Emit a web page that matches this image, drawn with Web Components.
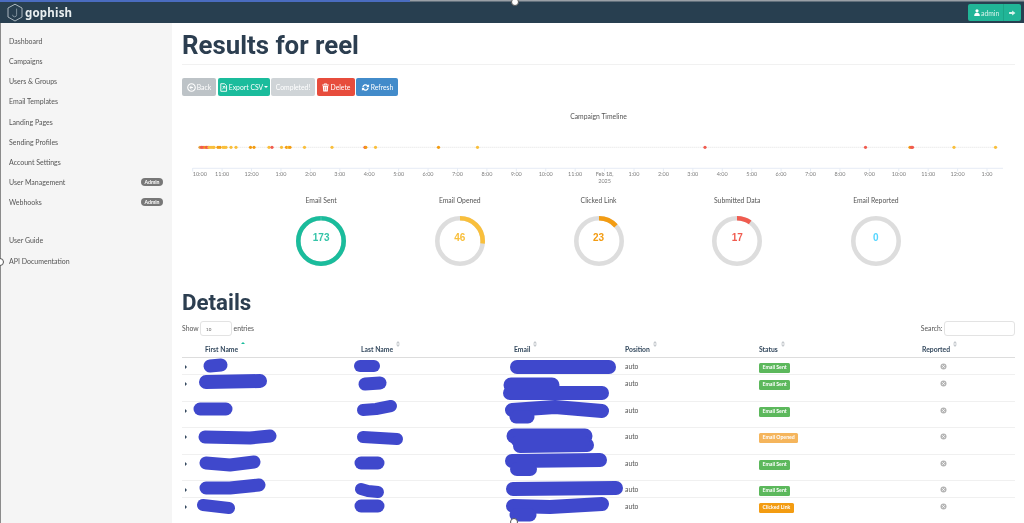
<!DOCTYPE html>
<html lang="en">
<head>
<meta charset="utf-8">
<title>gophish</title>
<style>
	html, body { margin: 0; height: 100%; background: #fff; overflow: hidden; }
</style>
</head>
<body>
<gp-app>
	<gp-topbar slot="top" user="admin"></gp-topbar>
	<gp-sidebar slot="side">
		<gp-nav-item>Dashboard</gp-nav-item>
		<gp-nav-item>Campaigns</gp-nav-item>
		<gp-nav-item>Users &amp; Groups</gp-nav-item>
		<gp-nav-item>Email Templates</gp-nav-item>
		<gp-nav-item>Landing Pages</gp-nav-item>
		<gp-nav-item>Sending Profiles</gp-nav-item>
		<gp-nav-item>Account Settings</gp-nav-item>
		<gp-nav-item badge="Admin">User Management</gp-nav-item>
		<gp-nav-item badge="Admin">Webhooks</gp-nav-item>
		<gp-nav-item class="first-help">User Guide</gp-nav-item>
		<gp-nav-item>API Documentation</gp-nav-item>
	</gp-sidebar>
	<gp-results>
		<gp-button slot="actions" color="#bdc3c7" icon="back" width="34">Back</gp-button>
		<gp-button slot="actions" color="#1abc9c" icon="file" width="52" caret>Export CSV</gp-button>
		<gp-button slot="actions" color="#cfd4d7" width="44">Completed!</gp-button>
		<gp-button slot="actions" color="#e74c3c" icon="trash" width="38">Delete</gp-button>
		<gp-button slot="actions" color="#428bca" icon="refresh" width="42">Refresh</gp-button>
		<gp-timeline slot="timeline"></gp-timeline>
		<gp-pie slot="pies" label="Email Sent" value="173" share="1" color="#1abc9c" text="#35c4a8"></gp-pie>
		<gp-pie slot="pies" label="Email Opened" value="46" share="0.266" color="#f9bf3b"></gp-pie>
		<gp-pie slot="pies" label="Clicked Link" value="23" share="0.133" color="#f39c12"></gp-pie>
		<gp-pie slot="pies" label="Submitted Data" value="17" share="0.098" color="#f05b4f"></gp-pie>
		<gp-pie slot="pies" label="Email Reported" value="0" share="0" color="#54d5ff"></gp-pie>
		<gp-table slot="details">
			<gp-row h="17" status="Email Sent" tone="#5cb85c"></gp-row>
			<gp-row h="27" status="Email Sent" tone="#5cb85c"></gp-row>
			<gp-row h="26" status="Email Sent" tone="#5cb85c"></gp-row>
			<gp-row h="27" status="Email Opened" tone="#f5b55c"></gp-row>
			<gp-row h="26" status="Email Sent" tone="#5cb85c"></gp-row>
			<gp-row h="17" status="Email Sent" tone="#5cb85c"></gp-row>
			<gp-row h="25" status="Clicked Link" tone="#f39c12"></gp-row>
		</gp-table>
	</gp-results>
	<gp-scribbles slot="over"></gp-scribbles>
</gp-app>

<script>
// icons used on the action buttons
const ICONS = {
	back: '<circle cx="5" cy="5" r="4.2" fill="none" stroke="#fff" stroke-width="1.2"/><path d="M6.6 5H3.4M5 3.2 3.2 5 5 6.8" fill="none" stroke="#fff" stroke-width="1.1"/>',
	file: '<path d="M2 .8h4.2L8.4 3v6.2H2z" fill="none" stroke="#fff" stroke-width="1"/><path d="M6.4 3.2 3.8 7M4 4h2.6v2.4" fill="none" stroke="#fff" stroke-width=".9"/>',
	trash: '<path d="M1.2 2.3h7.6M3.6 2.2V1h2.8v1.2" fill="none" stroke="#fff" stroke-width="1"/><path d="M2 3.2h6l-.5 6.2h-5z" fill="#fff"/><path d="M4 4.2v4M6 4.2v4" stroke="#e74c3c" stroke-width=".6"/>',
	refresh: '<path d="M1.4 4.4A3.7 3.7 0 0 1 7.8 2.6L9 1.4v3.4H5.6l1.2-1.2A2.3 2.3 0 0 0 2.8 4.4zM8.6 5.6A3.7 3.7 0 0 1 2.2 7.4L1 8.6V5.2h3.4L3.2 6.4a2.3 2.3 0 0 0 4-.8z" fill="#fff"/>'
};

class GpApp extends HTMLElement {
	constructor() {
		super();
		this.attachShadow({ mode: 'open' });
		this.shadowRoot.innerHTML = `
			<style>
				:host {
					display: grid;
					grid-template-rows: 23px 500px;
					grid-template-columns: 172px 852px;
					width: 1024px;
					height: 523px;
					position: relative;
					overflow: hidden;
					font-family: Lato, "Noto Sans", sans-serif;
					color: #555;
					filter: blur(0.4px);
				}
				.top { grid-column: 1 / 3; display: block; }
			</style>
			<slot name="top" class="top"></slot>
			<slot name="side"></slot>
			<slot></slot>
			<slot name="over"></slot>
		`;
	}
}

class GpTopbar extends HTMLElement {
	constructor() {
		super();
		this.attachShadow({ mode: 'open' });
	}

	connectedCallback() {
		this.shadowRoot.innerHTML = `
			<style>
				:host {
					display: flex;
					align-items: center;
					justify-content: space-between;
					grid-column: 1 / 3;
					height: 23px;
					box-sizing: border-box;
					padding: 2px 3px 0 6px;
					background: #283f50;
				}
				.brand { display: flex; align-items: center; gap: 1px; color: #e8eef0; font: 700 11.500px "Noto Sans", sans-serif; letter-spacing: .2px; }
				.user { display: flex; height: 17px; border-radius: 2px; background: #21b597; color: #d9f3ec; font-size: 6.800px; }
				.name { display: flex; align-items: center; gap: 1px; width: 35px; box-sizing: border-box; padding-left: 6px; }
				.out { display: flex; align-items: center; justify-content: center; width: 17px; border-left: 1px solid #1ca587; }
			</style>
			<div class="brand">
				<svg width="18" height="19" viewBox="0 0 18 19"><path d="M9 1.2 16 5v9l-7 4-7-4V5z" fill="none" stroke="#aab6be" stroke-width="1"/><path d="M10.6 5.6v6.2a2 2 0 0 1-4 0" fill="none" stroke="#7f909c" stroke-width="1"/></svg>
				<span>gophish</span>
			</div>
			<div class="user">
				<div class="name">
					<svg width="6" height="7" viewBox="0 0 6 7"><circle cx="3" cy="1.8" r="1.6" fill="#fff"/><path d="M.2 7c0-2.4 1-3.2 2.8-3.2S5.800 4.600 5.800 7z" fill="#fff"/></svg>
					<span>${this.getAttribute('user')}</span>
				</div>
				<div class="out">
					<svg width="7" height="6" viewBox="0 0 8 7"><path d="M0 2.400h3.600V.6L7.400 3.500 3.600 6.400V4.600H0z" fill="#d9f3ec"/></svg>
				</div>
			</div>
		`;
	}
}

class GpSidebar extends HTMLElement {
	constructor() {
		super();
		this.attachShadow({ mode: 'open' });
		this.shadowRoot.innerHTML = `
			<style>
				:host {
					display: block;
					box-sizing: border-box;
					height: 500px;
					padding-top: 7.700px;
					background: #f5f5f5;
					border-left: 1px solid #8b8b8b;
				}
				::slotted(.first-help) { margin-top: 18px; }
			</style>
			<slot></slot>
		`;
	}
}

class GpNavItem extends HTMLElement {
	constructor() {
		super();
		this.attachShadow({ mode: 'open' });
	}

	connectedCallback() {
		const badge = this.getAttribute('badge');
		this.shadowRoot.innerHTML = `
			<style>
				:host {
					display: flex;
					align-items: center;
					justify-content: space-between;
					height: 20.200px;
					padding: 0 9px 0 8px;
					font-size: 7px;
					color: #555;
				}
				.badge {
					padding: 0 3.500px;
					line-height: 8px;
					border-radius: 4px;
					background: #777;
					color: #fff;
					font-size: 5.200px;
					font-weight: 700;
				}
			</style>
			<slot></slot>
			${badge ? `<span class="badge">${badge}</span>` : ''}
		`;
	}
}

class GpResults extends HTMLElement {
	constructor() {
		super();
		this.attachShadow({ mode: 'open' });
		this.shadowRoot.innerHTML = `
			<style>
				:host {
					display: block;
					box-sizing: border-box;
					height: 500px;
					padding: 0 9px 0 10px;
					background: #fff;
				}
				h1, h2 { margin: 0; font-family: Roboto, sans-serif; font-weight: 700; color: #2c3e50; }
				h1 { height: 42px; box-sizing: border-box; padding-top: 6px; font-size: 25.800px; line-height: 32px; border-bottom: 1px solid #f1f1f1; }
				h2 { margin-top: 22.300px; height: 27px; font-size: 22.300px; line-height: 28px; }
				.actions { display: flex; gap: 1.500px; margin-top: 13px; height: 18px; }
				.pies { display: flex; justify-content: center; margin-top: 11px; }
			</style>
			<h1>Results for reel</h1>
			<div class="actions"><slot name="actions"></slot></div>
			<slot name="timeline"></slot>
			<div class="pies"><slot name="pies"></slot></div>
			<h2>Details</h2>
			<slot name="details"></slot>
		`;
	}
}

class GpButton extends HTMLElement {
	constructor() {
		super();
		this.attachShadow({ mode: 'open' });
	}

	connectedCallback() {
		const icon = this.getAttribute('icon');
		this.shadowRoot.innerHTML = `
			<style>
				:host {
					display: flex;
					align-items: center;
					justify-content: center;
					gap: 1px;
					box-sizing: border-box;
					width: ${this.getAttribute('width')}px;
					height: 18px;
					border-radius: 2px;
					background: ${this.getAttribute('color')};
					color: #fff;
					font-size: 6.800px;
				}
				.caret { width: 0; height: 0; border: 2px solid transparent; border-top: 2.500px solid #fff; border-bottom: 0; }
			</style>
			${icon ? `<svg width="9" height="9" viewBox="0 0 10 10">${ICONS[icon]}</svg>` : ''}
			<slot></slot>
			${this.hasAttribute('caret') ? '<span class="caret"></span>' : ''}
		`;
	}
}

class GpTimeline extends HTMLElement {
	constructor() {
		super();
		this.attachShadow({ mode: 'open' });
	}

	connectedCallback() {
		const hours = ['10:00', '11:00', '12:00', '1:00', '2:00', '3:00', '4:00', '5:00', '6:00', '7:00', '8:00', '9:00', '10:00', '11:00', null,
			'1:00', '2:00', '3:00', '4:00', '5:00', '6:00', '7:00', '8:00', '9:00', '10:00', '11:00', '12:00', '1:00'];
		const y = '#f9bf3b', o = '#f39c12', r = '#f05b4f';
		const dots = [[200, '#e8a33d'], [201.500, r], [203, r], [205, o], [206.500, r], [208, r], [209, y], [211, y], [213, y], [214, y], [218, o], [220, o],
			[223, y], [224.500, y], [226, y], [231, y], [236, y], [250.500, o], [254, o], [269, y], [272, r], [281.500, y],
			[286.500, o], [288.500, y], [290, o], [304.500, y], [332, y], [365, r], [365.800, o], [375.500, y], [438.500, o], [477.500, y],
			[705, r], [865.500, r], [910, o], [911.500, r], [912.500, r], [954, y], [995.500, y]];
		const x0 = 10.700;
		const step = 29.420;
		const ticks = hours.map((h, i) => {
			const x = x0 + i * step;
			const anchor = i === 0 ? ' style="text-anchor:start"' : '';
			const label = h === null
				? `<text x="${x}" y="48">Feb 18,</text><text x="${x}" y="54.500">2025</text>`
				: `<text x="${x}" y="48"${anchor}>${h}</text>`;
			return `<path d="M${x} 40v3.500" stroke="#e6ecf5"/>${label}`;
		}).join('');
		const points = dots.map(([x, c]) => `<circle cx="${x - 182}" cy="19.300" r="1.600" fill="${c}"/>`).join('');
		this.shadowRoot.innerHTML = `
			<style>
				:host { display: block; height: 88px; }
				.title { height: 32px; padding-top: 15px; box-sizing: border-box; text-align: center; font-size: 6.800px; line-height: 10px; }
				svg { display: block; }
				text { font: 5.500px Lato, "Noto Sans", sans-serif; fill: #808080; text-anchor: middle; }
			</style>
			<div class="title">Campaign Timeline</div>
			<svg width="833" height="56" viewBox="0 0 833 56">
				<path d="M16 19.300H816" stroke="#e2e2e2" stroke-width=".7" stroke-dasharray="1.500 .5"/>
				<path d="M10.700 40.300H821" stroke="#e6ecf5" stroke-width="1"/>
				${ticks}
				${points}
			</svg>
		`;
	}
}

class GpPie extends HTMLElement {
	constructor() {
		super();
		this.attachShadow({ mode: 'open' });
	}

	connectedCallback() {
		const share = Number(this.getAttribute('share'));
		const color = this.getAttribute('color');
		const r = 22.700;
		const len = 2 * Math.PI * r;
		const seam = share === 1 ? `<path d="M25 0v5" stroke="#fff" stroke-opacity=".35" stroke-width=".6"/>` : '';
		this.shadowRoot.innerHTML = `
			<style>
				:host { display: block; width: 138.700px; text-align: center; }
				.label { font-size: 6.800px; line-height: 10px; height: 20.700px; }
				.ring { position: relative; width: 50px; height: 50px; margin: 0 auto; }
				svg { display: block; }
				.value {
					position: absolute;
					inset: 0 0 6px 0;
					display: flex;
					align-items: center;
					justify-content: center;
					font: 700 10px "Liberation Sans", sans-serif;
					color: ${this.getAttribute('text') || color};
				}
			</style>
			<div class="label">${this.getAttribute('label')}</div>
			<div class="ring">
				<svg width="50" height="50" viewBox="0 0 50 50">
					<circle cx="25" cy="25" r="${r}" fill="none" stroke="#dddddd" stroke-width="4.600"/>
					<circle cx="25" cy="25" r="${r}" fill="none" stroke="${color}" stroke-width="4.600"
						stroke-dasharray="${share * len} ${len}" transform="rotate(-90 25 25)"/>
					${seam}
				</svg>
				<div class="value">${this.getAttribute('value')}</div>
			</div>
		`;
	}
}

const COLUMNS = '23px 156px 153px 111px 134px 163px 1fr';

class GpTable extends HTMLElement {
	constructor() {
		super();
		this.attachShadow({ mode: 'open' });
		const sort = `<svg class="sort" width="4" height="6" viewBox="0 0 4 6"><path d="M2 0 4 2.400H0zM2 6 0 3.600H4z" fill="#c4c8cc"/></svg>`;
		this.shadowRoot.innerHTML = `
			<style>
				:host { display: block; font-size: 6.800px; color: #555; }
				.controls { display: flex; align-items: center; justify-content: space-between; height: 15px; margin-top: 6px; }
				.group { display: flex; align-items: center; gap: 1.500px; }
				.box { box-sizing: border-box; height: 15px; border: 1px solid #e3e3e3; border-radius: 3px; background: #fff; }
				.select { width: 32px; padding-left: 5px; font-size: 4.500px; line-height: 16px; }
				.search { width: 71px; }
				.head {
					display: grid;
					grid-template-columns: ${COLUMNS};
					height: 22px;
					box-sizing: border-box;
					border-bottom: 1px solid #ddd;
					font-weight: 700;
					color: #34495e;
					line-height: 9px;
					padding-top: 9px;
				}
				.head span { display: flex; align-items: flex-start; gap: 3px; }
				.sort { margin-top: -4px; }
				.up { margin-top: -3px; width: 0; height: 0; border: 2.200px solid transparent; border-bottom: 2.500px solid #1abc9c; border-top: 0; }
				.foot { border-bottom: 1px solid #eee; }
			</style>
			<div class="controls">
				<div class="group">Show <div class="box select">10</div> entries</div>
				<div class="group">Search: <div class="box search"></div></div>
			</div>
			<div class="head">
				<span></span>
				<span>First Name <i class="up"></i></span>
				<span>Last Name ${sort}</span>
				<span>Email ${sort}</span>
				<span>Position ${sort}</span>
				<span>Status ${sort}</span>
				<span>Reported ${sort}</span>
			</div>
			<div class="foot"><slot></slot></div>
		`;
	}
}

class GpRow extends HTMLElement {
	constructor() {
		super();
		this.attachShadow({ mode: 'open' });
	}

	connectedCallback() {
		this.shadowRoot.innerHTML = `
			<style>
				:host {
					display: grid;
					grid-template-columns: ${COLUMNS};
					align-items: start;
					height: ${this.getAttribute('h')}px;
					box-sizing: border-box;
					padding-top: 4.500px;
					border-bottom: 1px solid #f0f0f0;
					font-size: 6.800px;
					line-height: 9px;
				}
				:host(:last-child) { border-bottom: 0; }
				.arrow { width: 0; height: 0; margin: 2.500px 0 0 3px; border: 2.200px solid transparent; border-left: 2.800px solid #34495e; border-right: 0; }
				.label {
					display: inline-block;
					padding: 0 3.500px;
					line-height: 9.500px;
					border-radius: 1.500px;
					background: ${this.getAttribute('tone')};
					color: #fff;
					font-size: 5.200px;
					font-weight: 700;
				}
				.reported { display: block; margin: .5px 0 0 18px; }
			</style>
			<span class="arrow"></span>
			<span></span>
			<span></span>
			<span></span>
			<span>auto</span>
			<span><span class="label">${this.getAttribute('status')}</span></span>
			<svg class="reported" width="7" height="7" viewBox="0 0 7 7">
				<circle cx="3.500" cy="3.500" r="3" fill="#b4b4b4"/>
				<path d="M2.200 2.200 4.800 4.800M4.800 2.200 2.200 4.800" stroke="#fff" stroke-width=".8"/>
			</svg>
		`;
	}
}

// the marker strokes and editor handles that lie over the screenshot
class GpScribbles extends HTMLElement {
	constructor() {
		super();
		this.attachShadow({ mode: 'open' });
	}

	connectedCallback() {
		const strokes = [
			[13, '210,366 221,365'], [14, '206,382 260,381'], [12, '360,366 374,366'], [13, '365,384 380,383'],
			[14, '517,367 609,367'], [15, '511,385 552,385'], [14, '510,393 602,393'],
			[13, '200,409 226,409'], [12, '363,410 376,409 391,406'], [14, '512,410 555,407 602,411'], [13, '516,417 528,417'],
			[13, '205,437 250,438 270,436'], [12, '363,437 397,439'], [15, '514,436 585,436'], [14, '520,446 587,445'], [10, '516,441 585,441'],
			[13, '206,463 230,465 254,462'], [13, '361,463 378,463'], [14, '512,461 600,460'], [14, '517,469 530,469'],
			[13, '206,488 230,488 259,485'], [12, '361,489 368,491 378,492'], [14, '513,489 616,488'],
			[12, '203,505 229,508'], [13, '361,506 378,506'], [14, '513,506 550,507 602,504'], [13, '516,515 530,515']
		];
		const lines = strokes.map(([w, p]) => `<polyline points="${p}" stroke-width="${w}"/>`).join('');
		this.shadowRoot.innerHTML = `
			<style>
				:host { position: absolute; inset: 0; pointer-events: none; }
				svg { display: block; }
				.marks { fill: none; stroke: #3f48cc; stroke-linecap: round; stroke-linejoin: round; }
			</style>
			<svg width="1024" height="523" viewBox="0 0 1024 523">
				<rect width="1024" height="1.500" fill="#9aa0a6"/>
				<rect width="410" height="2" fill="#4a6cc0"/>
				<g class="marks">${lines}</g>
				<g fill="#fff" stroke="#555" stroke-width="1">
					<circle cx="515" cy="2" r="3.500"/>
					<circle cx="0" cy="262" r="3.500"/>
					<circle cx="514" cy="522" r="3.500"/>
				</g>
			</svg>
		`;
	}
}

customElements.define('gp-app', GpApp);
customElements.define('gp-topbar', GpTopbar);
customElements.define('gp-sidebar', GpSidebar);
customElements.define('gp-nav-item', GpNavItem);
customElements.define('gp-results', GpResults);
customElements.define('gp-button', GpButton);
customElements.define('gp-timeline', GpTimeline);
customElements.define('gp-pie', GpPie);
customElements.define('gp-table', GpTable);
customElements.define('gp-row', GpRow);
customElements.define('gp-scribbles', GpScribbles);
</script>
</body>
</html>
